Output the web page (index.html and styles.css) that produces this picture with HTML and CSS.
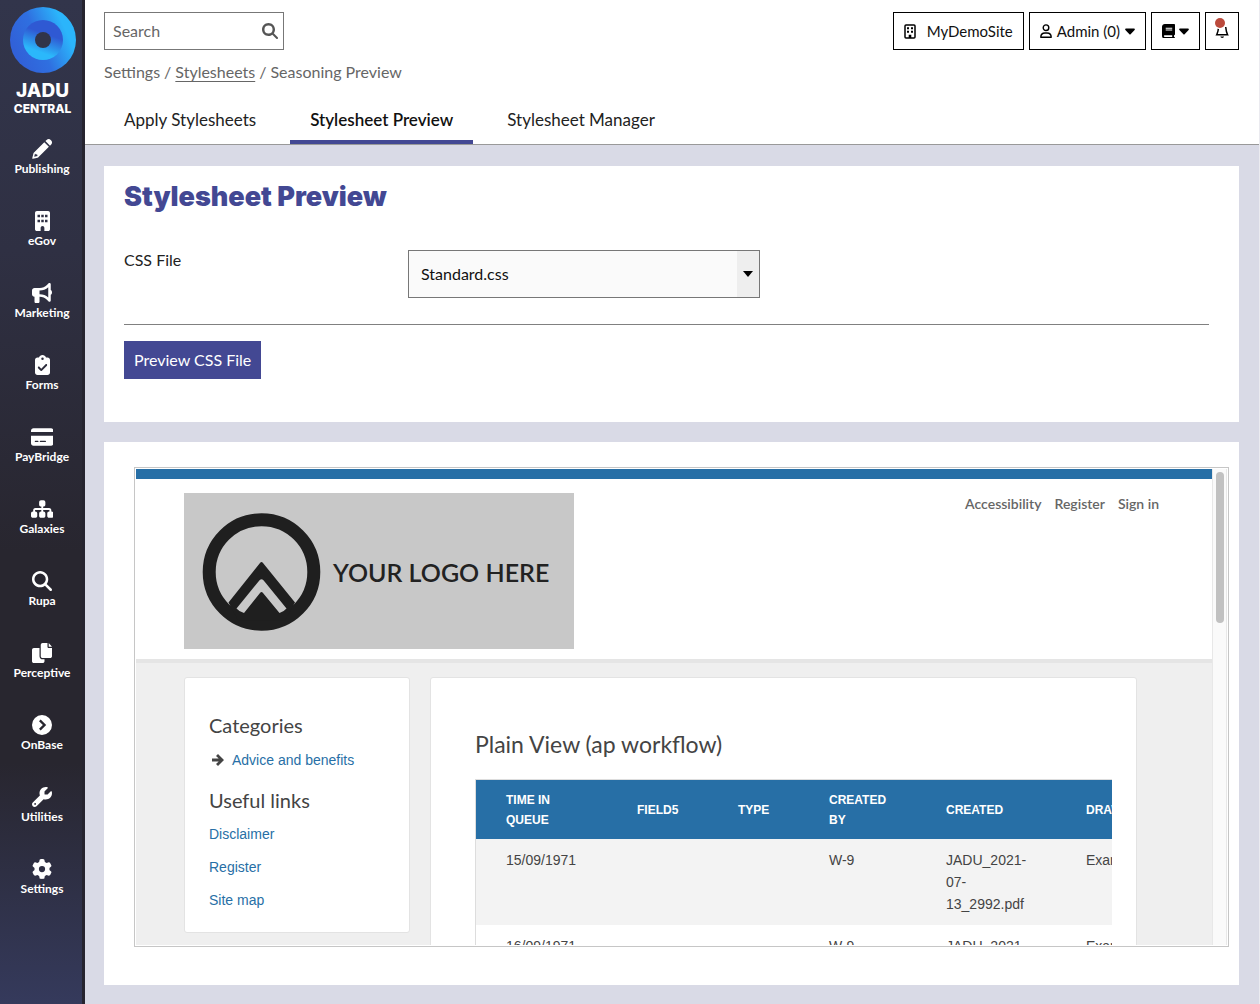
FILE: index.html
```html
<!DOCTYPE html>
<html lang="en">
<head>
<meta charset="utf-8">
<title>Stylesheet Preview</title>
<meta name="viewport" content="width=device-width, initial-scale=1">
<link rel="stylesheet" href="styles.css">
</head>
<body>
<div class="app">
  <nav class="sidebar" aria-label="Main">
    <a class="brand" href="#">
      <svg class="brand-mark" viewBox="0 0 66 66" aria-hidden="true">
        <defs>
          <linearGradient id="ring" x1="0" y1="0.75" x2="1" y2="0.3">
            <stop offset="0.1" stop-color="#3161d8"/><stop offset="0.45" stop-color="#2f6fe0"/><stop offset="0.85" stop-color="#2bb5fb"/>
          </linearGradient>
          <linearGradient id="core" x1="0.7" y1="0" x2="0.35" y2="1">
            <stop offset="0.35" stop-color="#2f59d3"/><stop offset="0.8" stop-color="#2bb8fb"/>
          </linearGradient>
        </defs>
        <circle cx="33" cy="33" r="33" fill="url(#ring)"/>
        <circle cx="33" cy="33" r="20" fill="url(#core)"/>
        <circle cx="33" cy="33" r="8" fill="#313449"/>
      </svg>
      <span class="brand-name">JADU</span>
      <span class="brand-product">CENTRAL</span>
    </a>
    <a class="nav-item" href="#"><svg viewBox="0 0 20 20"><path d="M12.3 3.2l4.6 4.6L6.6 18.1c-.3.3-.6.5-1 .6L1 19.8c-.5.1-.8-.3-.7-.8l1.1-4.6c.1-.4.3-.7.6-1zM13.400 2.100l1.200-1.200c1.200-1.200 3-1.200 4.100 0l.5.5c1.100 1.100 1.100 2.900 0 4.100L18 6.700z"/><path d="M3 14.500l-.8 3.300 3.300-.8-.3-1.500-1.700-.2z" fill="#313449"/></svg>Publishing</a>
    <a class="nav-item" href="#"><svg viewBox="0 0 384 512"><path fill-rule="evenodd" d="M48 0C21.500 0 0 21.500 0 48v416c0 26.500 21.500 48 48 48h96v-80c0-26.500 21.500-48 48-48s48 21.500 48 48v80h96c26.500 0 48-21.500 48-48V48c0-26.500-21.500-48-48-48zM64 96h64v64H64zm96 0h64v64h-64zm96 0h64v64h-64zM64 224h64v64H64zm96 0h64v64h-64zm96 0h64v64h-64z"/></svg>eGov</a>
    <a class="nav-item" href="#"><svg viewBox="0 0 512 512"><path d="M480 32c0-12.900-7.800-24.600-19.800-29.600s-25.700-2.200-34.900 6.900L381.700 53c-48 48-113.100 75-181 75H64c-35.300 0-64 28.700-64 64v96c0 35.300 28.700 64 64 64v128c0 17.700 14.300 32 32 32h64c17.700 0 32-14.300 32-32V352h8.700c67.900 0 133 27 181 75l43.600 43.600c9.200 9.200 22.900 11.900 34.900 6.900s19.800-16.600 19.800-29.600V300.400c18.600-8.800 32-32.500 32-60.400s-13.400-51.600-32-60.400zm-64 76.700v262.600C357.200 317.800 280.500 288 200.700 288H192v-96h8.700c79.800 0 156.500-29.800 215.300-83.300z"/></svg>Marketing</a>
    <a class="nav-item" href="#"><svg viewBox="0 0 384 512"><path fill-rule="evenodd" d="M192 0c-41.800 0-77.400 26.700-90.500 64H64C28.700 64 0 92.700 0 128v320c0 35.300 28.700 64 64 64h256c35.300 0 64-28.700 64-64V128c0-35.300-28.700-64-64-64h-37.500C269.400 26.700 233.800 0 192 0zm0 64a32 32 0 1 1 0 64 32 32 0 1 1 0-64zm113 209L177 401c-9.400 9.400-24.600 9.400-33.900 0l-64-64c-9.400-9.400-9.400-24.600 0-33.900s24.600-9.400 33.900 0l47 47L271 239c9.400-9.400 24.600-9.400 33.900 0s9.400 24.600 0 34z"/></svg>Forms</a>
    <a class="nav-item" href="#"><svg viewBox="0 0 576 512"><path fill-rule="evenodd" d="M64 32C28.700 32 0 60.700 0 96v32h576V96c0-35.300-28.700-64-64-64zM576 224H0v192c0 35.300 28.700 64 64 64h448c35.300 0 64-28.700 64-64zM112 352h64c8.800 0 16 7.200 16 16s-7.200 16-16 16h-64c-8.800 0-16-7.200-16-16s7.200-16 16-16zm112 16c0-8.800 7.200-16 16-16h128c8.800 0 16 7.200 16 16s-7.200 16-16 16H240c-8.800 0-16-7.200-16-16z"/></svg>PayBridge</a>
    <a class="nav-item" href="#"><svg viewBox="0 0 576 512"><path d="M208 80c0-26.500 21.500-48 48-48h64c26.500 0 48 21.500 48 48v64c0 26.500-21.500 48-48 48h-8v40h152c30.900 0 56 25.100 56 56v32h8c26.500 0 48 21.500 48 48v64c0 26.500-21.500 48-48 48h-64c-26.500 0-48-21.500-48-48v-64c0-26.500 21.500-48 48-48h8v-32c0-4.400-3.600-8-8-8H312v40h8c26.500 0 48 21.500 48 48v64c0 26.500-21.500 48-48 48h-64c-26.500 0-48-21.500-48-48v-64c0-26.500 21.500-48 48-48h8v-40H112c-4.400 0-8 3.600-8 8v32h8c26.500 0 48 21.500 48 48v64c0 26.500-21.500 48-48 48H48c-26.500 0-48-21.500-48-48v-64c0-26.500 21.500-48 48-48h8v-32c0-30.900 25.100-56 56-56h152v-40h-8c-26.500 0-48-21.500-48-48z"/></svg>Galaxies</a>
    <a class="nav-item" href="#"><svg viewBox="0 0 512 512"><path d="M416 208c0 45.900-14.900 88.300-40 122.700l126.600 126.700c12.500 12.500 12.500 32.800 0 45.300s-32.800 12.500-45.300 0L330.700 376c-34.400 25.200-76.800 40-122.700 40C93.100 416 0 322.900 0 208S93.100 0 208 0s208 93.100 208 208zM208 352a144 144 0 1 0 0-288 144 144 0 1 0 0 288z"/></svg>Rupa</a>
    <a class="nav-item" href="#"><svg viewBox="0 0 512 512"><path d="M272 0h124v96c0 17.700 14.300 32 32 32h84v208c0 26.500-21.500 48-48 48H272c-26.500 0-48-21.500-48-48V48c0-26.500 21.500-48 48-48zM428 0l84 96h-84zM48 128h144v208c0 44.200 35.800 80 80 80h48v48c0 26.500-21.500 48-48 48H48c-26.500 0-48-21.500-48-48V176c0-26.500 21.500-48 48-48z"/></svg>Perceptive</a>
    <a class="nav-item" href="#"><svg viewBox="0 0 512 512"><path fill-rule="evenodd" d="M0 256a256 256 0 1 0 512 0A256 256 0 1 0 0 256zm180-99l42-42 141 141-141 141-42-42 99-99z"/></svg>OnBase</a>
    <a class="nav-item" href="#"><svg viewBox="0 0 512 512"><path d="M352 320c88.400 0 160-71.600 160-160 0-15.300-2.200-30.100-6.200-44.200-3.100-10.800-16.400-13.200-24.300-5.300l-76.800 76.800c-3 3-7.100 4.700-11.300 4.700H336c-8.800 0-16-7.200-16-16v-57.400c0-4.200 1.700-8.300 4.700-11.300l76.800-76.800c7.900-7.900 5.400-21.200-5.300-24.300C382.100 2.200 367.300 0 352 0 263.600 0 192 71.600 192 160c0 19.100 3.400 37.500 9.500 54.500L19.900 396.100C7.200 408.800 0 426.100 0 444.100 0 481.600 30.400 512 67.900 512c18 0 35.300-7.200 48-19.900l181.600-181.600c17 6.200 35.400 9.500 54.500 9.500zM80 408a24 24 0 1 1 0 48 24 24 0 1 1 0-48z"/></svg>Utilities</a>
    <a class="nav-item" href="#"><svg viewBox="0 0 512 512"><path d="M495.900 166.600c3.200 8.700.5 18.400-6.400 24.600l-43.300 39.400c1.100 8.300 1.700 16.800 1.700 25.400s-.6 17.100-1.700 25.400l43.300 39.400c6.900 6.200 9.600 15.900 6.400 24.600-4.400 11.900-9.700 23.300-15.800 34.300l-4.700 8.100c-6.600 11-14 21.400-22.100 31.200-5.900 7.200-15.700 9.600-24.500 6.800l-55.700-17.700c-13.400 10.300-28.200 18.900-44 25.400l-12.500 57.100c-2 9.100-9 16.300-18.200 17.800-13.800 2.300-28 3.500-42.500 3.500s-28.700-1.200-42.500-3.500c-9.200-1.500-16.200-8.700-18.200-17.800l-12.500-57.100c-15.800-6.500-30.600-15.100-44-25.400l-55.600 17.800c-8.800 2.800-18.600.3-24.500-6.800-8.100-9.800-15.500-20.200-22.100-31.200l-4.700-8.100c-6.100-11-11.400-22.400-15.800-34.300-3.200-8.700-.5-18.400 6.400-24.600l43.300-39.400C64.600 273.100 64 264.600 64 256s.6-17.100 1.700-25.400l-43.300-39.400c-6.900-6.200-9.600-15.900-6.400-24.600 4.400-11.900 9.700-23.300 15.800-34.300l4.700-8.100c6.600-11 14-21.400 22.100-31.200 5.900-7.200 15.700-9.600 24.500-6.800l55.700 17.700c13.400-10.300 28.200-18.900 44-25.400l12.500-57.100c2-9.100 9-16.300 18.200-17.800C227.300 1.200 241.500 0 256 0s28.700 1.200 42.500 3.500c9.200 1.500 16.200 8.700 18.200 17.800l12.500 57.100c15.800 6.500 30.600 15.100 44 25.400l55.700-17.700c8.800-2.800 18.600-.3 24.500 6.800 8.100 9.800 15.500 20.200 22.100 31.200l4.700 8.100c6.100 11 11.400 22.400 15.800 34.300zM256 336a80 80 0 1 0 0-160 80 80 0 1 0 0 160z"/></svg>Settings</a>
  </nav>

  <div class="content">
    <header class="topbar">
      <div class="toolbar">
        <form class="search">
          <input type="text" placeholder="Search" aria-label="Search">
          <button type="button" aria-label="Run search"><svg viewBox="0 0 512 512"><path d="M416 208c0 45.900-14.900 88.300-40 122.700l126.600 126.700c12.500 12.500 12.500 32.800 0 45.300s-32.800 12.500-45.300 0L330.700 376c-34.400 25.200-76.800 40-122.700 40C93.100 416 0 322.900 0 208S93.100 0 208 0s208 93.100 208 208zM208 338a130 130 0 1 0 0-260 130 130 0 1 0 0 260z"/></svg></button>
        </form>
        <div class="actions">
          <button class="action site" type="button"><svg class="building" viewBox="0 0 12 15"><rect x="1" y="1" width="10" height="13" rx="1" fill="none" stroke="#000" stroke-width="1.500"/><path d="M3 3.200h2v2H3zm4 0h2v2H7zM3 6.700h2v2H3zm4 0h2v2H7zM4.700 14v-3.200h2.600V14z"/></svg>MyDemoSite</button>
          <button class="action admin" type="button"><svg class="person" viewBox="0 0 12 14"><circle cx="6" cy="3.700" r="2.800" fill="none" stroke="#000" stroke-width="1.400"/><path d="M.8 13.200c0-2.600 1.900-4.200 4.200-4.200h2c2.300 0 4.200 1.600 4.200 4.200z" fill="none" stroke="#000" stroke-width="1.400" stroke-linejoin="round"/></svg>Admin (0)<svg class="caret" viewBox="0 0 10 7"><path d="M1 .500h8c.8 0 1.200.9.600 1.500L5.600 6.200c-.3.400-.9.400-1.200 0L.4 2C-.2 1.400.2.500 1 .500z"/></svg></button>
          <button class="action" type="button" aria-label="Guides"><svg class="book" viewBox="0 0 448 512"><path fill-rule="evenodd" d="M96 0C43 0 0 43 0 96v320c0 53 43 96 96 96h320c17.700 0 32-14.300 32-32s-14.300-32-32-32v-64c17.700 0 32-14.300 32-32V32c0-17.700-14.300-32-32-32zm0 384h256v64H96c-17.700 0-32-14.300-32-32s14.300-32 32-32zm32-256h224v36H128zm0 64h224v36H128z"/></svg><svg class="caret" viewBox="0 0 10 7"><path d="M1 .500h8c.8 0 1.200.9.600 1.500L5.600 6.200c-.3.400-.9.400-1.200 0L.4 2C-.2 1.400.2.500 1 .500z"/></svg></button>
          <button class="action alerts" type="button" aria-label="Notifications"><svg class="bell" viewBox="0 0 14 26"><path d="M3.600 8.500c-.2 3.500-.6 6-1.900 8.300h10.900c-1.300-2.300-1.600-4.800-1.900-7.800" fill="none" stroke="#000" stroke-width="1.500"/><path d="M5.400 18.500h3.600c0 .8-.8 1.400-1.800 1.400s-1.800-.6-1.800-1.400z"/><circle cx="5" cy="5" r="6.200" fill="#fff"/><circle cx="5" cy="5" r="5" fill="#bb4a3c"/></svg></button>
        </div>
      </div>
      <nav class="crumbs" aria-label="Breadcrumb"><span>Settings</span><span>/</span><a href="#">Stylesheets</a><span>/</span><span>Seasoning Preview</span></nav>
      <nav class="tabs" aria-label="Sections">
        <a class="tab" href="#">Apply Stylesheets</a>
        <a class="tab active" href="#" aria-current="page">Stylesheet Preview</a>
        <a class="tab" href="#">Stylesheet Manager</a>
      </nav>
    </header>

    <main class="main">
      <form class="panel form-panel">
        <h1>Stylesheet Preview</h1>
        <div class="field">
          <label for="css-file">CSS File</label>
          <div class="select">
            <select id="css-file"><option>Standard.css</option></select>
            <span class="select-arrow"><svg viewBox="0 0 10 6"><path d="M0 0h10L5 6z"/></svg></span>
          </div>
        </div>
        <div class="buttons"><button class="primary" type="button">Preview CSS File</button></div>
      </form>

      <section class="panel preview-panel">
        <div class="frame">
          <div class="site-page">
            <header class="site-header">
              <svg class="site-logo" viewBox="0 0 390 156" role="img" aria-label="Your logo here">
                <rect width="390" height="156" fill="#c8c8c8"/>
                <circle cx="77.500" cy="79" r="52.300" fill="none" stroke="#1f1f1f" stroke-width="13"/>
                <path d="M44.500 109.500L76 70q1.500-2 3 0l32 39.500-10 18H54z" fill="#1f1f1f"/>
                <path d="M52.500 115.500l22-27q3-4.500 6 0l22 27q-3 3.500-7 4.500L79 100q-1.500-2-3 0l-16 20q-4.500-1-7.500-4.500z" fill="#c8c8c8"/>
                <text class="logo-text" x="149" y="89">YOUR LOGO HERE</text>
              </svg>
              <nav class="site-links" aria-label="Account"><a href="#">Accessibility</a><a href="#">Register</a><a href="#">Sign in</a></nav>
            </header>
            <div class="site-body">
              <aside class="card site-aside">
                <h2>Categories</h2>
                <a class="category" href="#"><svg viewBox="0 0 12 12"><path d="M0 4.500h6.700L4 2 6 0l6 6-6 6-2-2 2.700-2.500H0z"/></svg>Advice and benefits</a>
                <h2>Useful links</h2>
                <ul>
                  <li><a href="#">Disclaimer</a></li>
                  <li><a href="#">Register</a></li>
                  <li><a href="#">Site map</a></li>
                </ul>
              </aside>
              <article class="card site-article">
                <h2>Plain View (ap workflow)</h2>
                <div class="table-scroll">
                  <table>
                    <colgroup><col class="c-time"><col class="c-field"><col class="c-type"><col class="c-by"><col class="c-created"><col class="c-draw"></colgroup>
                    <thead><tr><th>Time in queue</th><th>Field5</th><th>Type</th><th>Created by</th><th>Created</th><th>Draw</th></tr></thead>
                    <tbody>
                      <tr><td>15/09/1971</td><td></td><td></td><td>W-9</td><td>JADU_2021-<wbr>07-<wbr>13_2992.pdf</td><td>Exam</td></tr>
                      <tr><td>16/09/1971</td><td></td><td></td><td>W-9</td><td>JADU_2021-<wbr>07-<wbr>13_2992.pdf</td><td>Exam</td></tr>
                    </tbody>
                  </table>
                </div>
              </article>
            </div>
          </div>
          <div class="scrollbar"><div class="thumb"></div></div>
        </div>
      </section>
    </main>
  </div>
</div>
</body>
</html>
```
FILE: styles.css
```css
* { box-sizing: border-box; }

body {
  margin: 0;
  background: #d9dae6;
  color: #222;
  font: 400 16px/20px Lato, "Liberation Sans", sans-serif;
}

button, input, select { font: inherit; color: inherit; }
a { color: inherit; text-decoration: none; }
svg { display: block; }

.app { display: flex; min-height: 100vh; }

/* Sidebar */
.sidebar {
  flex: 0 0 85px;
  padding: 7px 0 0;
  border-right: 3px solid #26242f;
  background: linear-gradient(#32354b 0, #2f3043 25%, #28262f 55%, #28262f 76%, #353a5c 100%);
  color: #fff;
  text-align: center;
}
.brand {
  display: flex;
  flex-direction: column;
  align-items: center;
  padding-left: 3px;
  height: 126px;
  font-family: Inter, "Liberation Sans", sans-serif;
  font-weight: 800;
}
.brand-mark { width: 66px; height: 66px; }
.brand-name { margin-top: 8px; font-size: 19px; line-height: 20px; }
.brand-product { font-size: 12px; line-height: 15px; }
.nav-item {
  display: flex;
  flex-direction: column;
  align-items: center;
  height: 72px;
  padding: 6px 0 0 2px;
  font-size: 12px;
  font-weight: 700;
  line-height: 20px;
}
.nav-item svg { height: 20px; fill: #fff; }

/* Header */
.content { flex: 1; min-width: 0; border-right: 1px solid #ebebf0; }
.topbar {
  padding: 12px 20px 0 19px;
  border-bottom: 1px solid #999;
  background: #fff;
}
.toolbar { display: flex; justify-content: space-between; }
.search {
  display: flex;
  width: 180px;
  height: 38px;
  border: 1px solid #777;
}
.search input {
  flex: 1;
  min-width: 0;
  padding: 0 8px;
  border: 0;
  background: none;
  outline: 0;
}
.search input::placeholder { color: #666; opacity: 1; }
.search button { padding: 0 5px; border: 0; background: none; }
.search svg { width: 16px; fill: #555; }
.actions { display: flex; gap: 5px; }
.action {
  display: flex;
  align-items: center;
  gap: 4px;
  height: 38px;
  padding: 0 10px;
  border: 1px solid #000;
  background: #fff;
  color: #111;
  font-size: 15px;
}
.site { gap: 11px; }
.admin { gap: 5px; }
.building { width: 12px; }
.person { width: 12px; }
.caret { width: 10px; }
.book { width: 13px; }
.bell { width: 14px; height: 26px; }
.alerts { padding: 0 9px; }

.crumbs {
  display: flex;
  gap: 4px;
  margin-top: 12px;
  color: #666;
}
.crumbs a { text-decoration: underline; text-underline-offset: 3px; }

.tabs { display: flex; gap: 14px; margin-top: 14px; }
.tab {
  padding: 14px 20px 10px;
  border-bottom: 4px solid transparent;
  font-size: 17px;
}
.tab.active { border-color: #434893; color: #111; font-weight: 600; }

/* Panels */
.main {
  display: flex;
  flex-direction: column;
  gap: 20px;
  padding: 21px 20px 19px 19px;
}
.panel { background: #fff; }
.form-panel { padding: 14px 30px 43px 20px; }
h1 {
  margin: 0 0 36px;
  color: #434893;
  font: 900 27px/34px Inter, "Liberation Sans", sans-serif;
}
.field {
  display: grid;
  grid-template-columns: 284px minmax(0, 352px);
  padding-bottom: 26px;
  border-bottom: 1px solid #808080;
}
.select { position: relative; }
.select select {
  display: block;
  width: 100%;
  height: 48px;
  padding: 0 30px 0 12px;
  border: 1px solid #777;
  border-radius: 0;
  background: #fafafa;
  color: #111;
  appearance: none;
}
.select-arrow {
  position: absolute;
  inset: 1px 1px 1px auto;
  display: flex;
  align-items: center;
  justify-content: center;
  width: 22px;
  background: #eee;
  pointer-events: none;
}
.select-arrow svg { width: 10px; }
.buttons { padding-top: 16px; }
.primary {
  height: 38px;
  padding: 0 10px;
  border: 0;
  background: #434893;
  color: #fff;
}

/* Preview frame */
.preview-panel { padding: 25px 10px 38px 30px; }
.frame {
  display: flex;
  height: 480px;
  padding: 1px;
  border: 1px solid #c6c6c6;
  overflow: hidden;
}
.scrollbar {
  flex: 0 0 15px;
  padding: 3px 2px 0 3px;
  border: solid #e8e8e8;
  border-width: 0 1px;
  background: #fafafa;
}
.thumb { height: 151px; border-radius: 4px; background: #c1c1c1; }
.site-page {
  flex: 1;
  min-width: 0;
  overflow: hidden;
  border-top: 10px solid #276fa6;
  background: #efefef;
  color: #444;
}
.site-header {
  display: flex;
  justify-content: space-between;
  padding: 14px 53px 10px 48px;
  border-bottom: 4px solid #e5e5e5;
  background: #fff;
}
.site-logo { width: 390px; height: 156px; }
.logo-text { font: 600 25px Lato, sans-serif; fill: #222; }
.site-links {
  display: flex;
  gap: 13px;
  padding-top: 1px;
  color: #666;
  font-size: 14px;
  font-weight: 600;
}
.site-body {
  display: grid;
  grid-template-columns: 226px minmax(0, 1fr);
  align-items: start;
  gap: 20px;
  padding: 14px 75px 0 48px;
}
.card {
  border: 1px solid #e3e3e3;
  border-radius: 3px;
  background: #fff;
  font: 400 14px/22px "Liberation Sans", Arial, sans-serif;
}
.card h2 { margin: 0; font-family: Lato, sans-serif; font-weight: 400; }
.site-aside { padding: 33px 24px 21px; color: #276fa6; }
.site-aside h2 { color: #444; font-size: 20px; line-height: 28px; }
.category {
  display: flex;
  align-items: center;
  gap: 8px;
  margin: 10px 0 15px 3px;
}
.category svg { width: 12px; fill: #444; }
.site-aside ul {
  display: grid;
  gap: 11px;
  margin: 9px 0 0;
  padding: 0;
  list-style: none;
}
.site-aside li { min-height: 22px; }
.site-article { padding: 50px 24px 40px 44px; }
.site-article h2 { margin-bottom: 19px; font-size: 23px; line-height: 32px; }
.table-scroll { overflow: hidden; border: solid #ddd; border-width: 1px 0 0 1px; }
table { width: 756px; table-layout: fixed; border-collapse: collapse; }
.c-time { width: 131px; }
.c-field { width: 101px; }
.c-type { width: 91px; }
.c-by { width: 117px; }
.c-created { width: 140px; }
th, td { padding: 10px 20px 10px 30px; text-align: left; vertical-align: top; }
th {
  height: 59px;
  padding-bottom: 9px;
  background: #276fa6;
  color: #fff;
  font-size: 12px;
  line-height: 20px;
  text-transform: uppercase;
  vertical-align: middle;
}
tbody tr:nth-child(odd) { background: #f3f3f3; }
```
